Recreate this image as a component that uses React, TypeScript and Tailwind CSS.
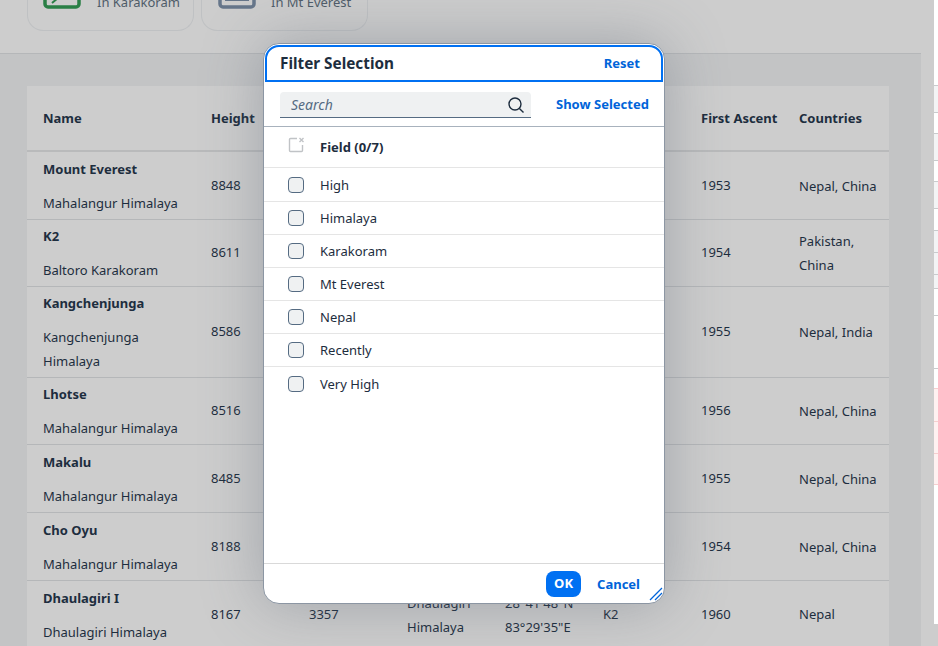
const rows = [
  { name: "Mount Everest", range: ["Mahalangur Himalaya"], height: "8848", year: "1953", countries: ["Nepal, China"], h: "h-[68px]" },
  { name: "K2", range: ["Baltoro Karakoram"], height: "8611", year: "1954", countries: ["Pakistan,", "China"], h: "h-[67px]" },
  { name: "Kangchenjunga", range: ["Kangchenjunga", "Himalaya"], height: "8586", year: "1955", countries: ["Nepal, India"], h: "h-[91px]" },
  { name: "Lhotse", range: ["Mahalangur Himalaya"], height: "8516", year: "1956", countries: ["Nepal, China"], h: "h-[67px]" },
  { name: "Makalu", range: ["Mahalangur Himalaya"], height: "8485", year: "1955", countries: ["Nepal, China"], h: "h-[68px]" },
  { name: "Cho Oyu", range: ["Mahalangur Himalaya"], height: "8188", year: "1954", countries: ["Nepal, China"], h: "h-[68px]" },
];

const fields = ["High", "Himalaya", "Karakoram", "Mt Everest", "Nepal", "Recently", "Very High"];

// what shows of the undimmed page at the far right edge
const sliver = [
  { h: "h-[85px]", c: "bg-white" },
  { h: "h-[27px]", c: "bg-[#f3f4f5] border-t border-[#c9cbcd]" },
  { h: "h-[21px]", c: "bg-white border-t border-[#c9cbcd]" },
  { h: "h-[27px]", c: "bg-[#f3f4f5] border-t border-[#c9cbcd]" },
  { h: "h-[21px]", c: "bg-white border-t border-[#c9cbcd]" },
  { h: "h-[27px]", c: "bg-[#f3f4f5] border-t border-[#c9cbcd]" },
  { h: "h-[22px]", c: "bg-white border-t border-[#c9cbcd]" },
  { h: "h-[22px]", c: "bg-[#f3f4f5] border-t border-[#c9cbcd]" },
  { h: "h-[22px]", c: "bg-[#f3f4f5] border-t border-[#c9cbcd]" },
  { h: "h-[14px]", c: "bg-[#f3f4f5] border-t border-[#c9cbcd]" },
  { h: "h-[27px]", c: "bg-white border-t border-[#c9cbcd]" },
  { h: "h-[53px]", c: "bg-white border-t border-[#c9cbcd]" },
  { h: "h-[20px]", c: "bg-white border-t border-[#c9cbcd]" },
  { h: "h-[33px]", c: "bg-[#fff1f1] border-t border-[#f6cfcf]" },
  { h: "h-[32px]", c: "bg-[#fff1f1] border-t border-[#f6cfcf]" },
  { h: "h-[31px]", c: "bg-[#fff1f1] border-t border-[#f6cfcf]" },
  { h: "h-[140px]", c: "bg-white border-t border-[#f6cfcf]" },
];

function Row({ r }: { r: (typeof rows)[number] }) {
  return (
    <div className={`flex items-center border-b border-[#b5b7b9] ${r.h}`}>
      <div className="w-[184px] pl-4">
        <div className="font-bold leading-[24px]">{r.name}</div>
        <div className="mt-[10px] leading-[24px]">
          {r.range.map((t) => (
            <div key={t}>{t}</div>
          ))}
        </div>
      </div>
      <div className="w-[490px]">{r.height}</div>
      <div className="w-[98px]">{r.year}</div>
      <div className="leading-[24px]">
        {r.countries.map((t) => (
          <div key={t}>{t}</div>
        ))}
      </div>
    </div>
  );
}

export default function App() {
  return (
    <div
      className="relative flex h-[646px] w-[938px] overflow-hidden bg-[#cdcdcd] text-[13px] text-[#1d2d3e]"
      style={{ fontFamily: '"Noto Sans", "Open Sans", sans-serif' }}
    >
      <div className="w-[934px]">
        {/* top tiles, cut off by the viewport */}
        <div className="flex h-[54px] w-[921px] gap-[7px] border-b border-[#b5b7b9] pl-[27px]">
          <div className="flex h-[31px] w-[167px] items-end whitespace-nowrap rounded-b-2xl border border-t-0 border-[#bfc1c3] pb-[18px] pl-[15px]">
            <svg width="38" height="12" viewBox="0 0 38 12" fill="none" stroke="#2a7f45" strokeWidth="3.5" className="mb-[3px] mr-[16px] shrink-0">
              <path d="M2 0V7a3 3 0 0 0 3 3H33a3 3 0 0 0 3-3V0" />
              <path d="M9 6L15 1M20 1H26" strokeWidth="2" />
            </svg>
            <span className="leading-[20px] text-[#4f5c69]">In Karakoram</span>
          </div>
          <div className="flex h-[31px] w-[167px] items-end whitespace-nowrap rounded-b-2xl border border-t-0 border-[#bfc1c3] pb-[18px] pl-[16px]">
            <svg width="38" height="12" viewBox="0 0 38 12" fill="none" stroke="#66768a" strokeWidth="3.5" className="mb-[3px] mr-[15px] shrink-0">
              <path d="M2 0V7a3 3 0 0 0 3 3H33a3 3 0 0 0 3-3V0" />
              <path d="M7 3H31" strokeWidth="2" />
            </svg>
            <span className="leading-[20px] text-[#4f5c69]">In Mt Everest</span>
          </div>
        </div>

        <div className="h-[592px] w-[921px] bg-[#c3c4c5] pl-[27px] pt-[32px]">
          <div className="h-[560px] w-[862px] bg-[#cdcdcd]">
            <div className="flex h-[66px] items-center border-b-2 border-[#b9babb] pt-[2px] font-bold">
              <div className="w-[184px] pl-4">Name</div>
              <div className="w-[490px]">Height</div>
              <div className="w-[98px]">First Ascent</div>
              <div>Countries</div>
            </div>
            {rows.map((r) => (
              <Row key={r.name} r={r} />
            ))}
            <div className="flex h-[68px] items-center">
              <div className="w-[184px] pl-4">
                <div className="font-bold leading-[24px]">Dhaulagiri I</div>
                <div className="mt-[10px] leading-[24px]">Dhaulagiri Himalaya</div>
              </div>
              <div className="w-[98px]">8167</div>
              <div className="w-[98px]">3357</div>
              <div className="w-[98px] leading-[24px]">
                <div>Dhaulagiri</div>
                <div>Himalaya</div>
              </div>
              <div className="w-[98px] leading-[24px]">
                <div>28°41'48"N</div>
                <div>83°29'35"E</div>
              </div>
              <div className="w-[98px]">K2</div>
              <div className="w-[98px]">1960</div>
              <div>Nepal</div>
            </div>
          </div>
        </div>
      </div>

      <div className="flex-1">
        {sliver.map((s, i) => (
          <div key={i} className={`${s.h} ${s.c}`} />
        ))}
      </div>

      {/* dialog */}
      <div className="absolute left-[263px] top-[43px] flex h-[561px] w-[402px] flex-col overflow-hidden rounded-2xl border border-[#8c96a3] bg-white shadow-[0_0_60px_rgba(90,100,115,0.4)]">
        <div className="mx-px mt-px flex h-[37px] items-center justify-between rounded-t-[14px] border-2 border-[#0070f2] pl-[13px] pr-[21px]">
          <span className="text-[15.3px] font-bold">Filter Selection</span>
          <span className="font-bold text-[#0064d9]">Reset</span>
        </div>
        <div className="flex h-[45px] items-center gap-[25px] border-b border-[#a8b2bd] pl-[16px] pt-[2px]">
          <div className="flex h-[26px] w-[251px] items-center justify-between rounded-t-[4px] border-b border-[#556b82] bg-[#eff1f2] pl-[11px] pr-[6px]">
            <span className="text-[14px] italic text-[#556b82]">Search</span>
            <svg width="18" height="18" viewBox="0 0 18 18" fill="none" stroke="#1d2d3e" strokeWidth="1.4">
              <circle cx="8" cy="8" r="6" />
              <path d="M12.4 12.4 L16.5 16.5" />
            </svg>
          </div>
          <span className="font-bold text-[#0064d9]">Show Selected</span>
        </div>
        <div className="flex h-[41px] items-center border-b border-[#e5e5e5] pl-[24px]">
          <svg width="16" height="16" viewBox="0 0 16 16" fill="none" stroke="#c0c3c6" strokeWidth="1.4" className="-mt-[4px] mr-[16px]">
            <path d="M9 1.5H2.5a1 1 0 0 0-1 1v11a1 1 0 0 0 1 1h11a1 1 0 0 0 1-1V8" />
            <path d="M11.5 1 L15.5 5 M15.5 1 L11.5 5" />
          </svg>
          <span className="pt-[2px] font-bold">Field (0/7)</span>
        </div>
        <div className="flex-1">
          {fields.map((f, i) => (
            <div
              key={f}
              className={`flex items-center pl-[24px] ${i === 0 ? "h-[34px]" : "h-[33px]"} ${i < fields.length - 1 ? "border-b border-[#e5e5e5]" : ""}`}
            >
              <span className="mr-[16px] h-4 w-4 rounded-[4px] border border-[#556b82] bg-[#eff1f2]" />
              <span className="pt-[2px]">{f}</span>
            </div>
          ))}
        </div>
        <div className="relative flex h-[40px] items-center justify-end border-t border-[#d9d9d9] pr-[24px]">
          <span className="mr-[16px] flex h-[26px] w-[35px] items-center justify-center rounded-lg bg-[#0070f2] font-bold text-white">
            OK
          </span>
          <span className="pt-[2px] font-bold text-[#0064d9]">Cancel</span>
          <svg width="14" height="14" viewBox="0 0 14 14" stroke="#0064d9" strokeWidth="1.3" className="absolute bottom-[2px] right-[1px]">
            <path d="M1 13 L13 1 M6 13 L13 6" />
          </svg>
        </div>
      </div>
    </div>
  );
}
